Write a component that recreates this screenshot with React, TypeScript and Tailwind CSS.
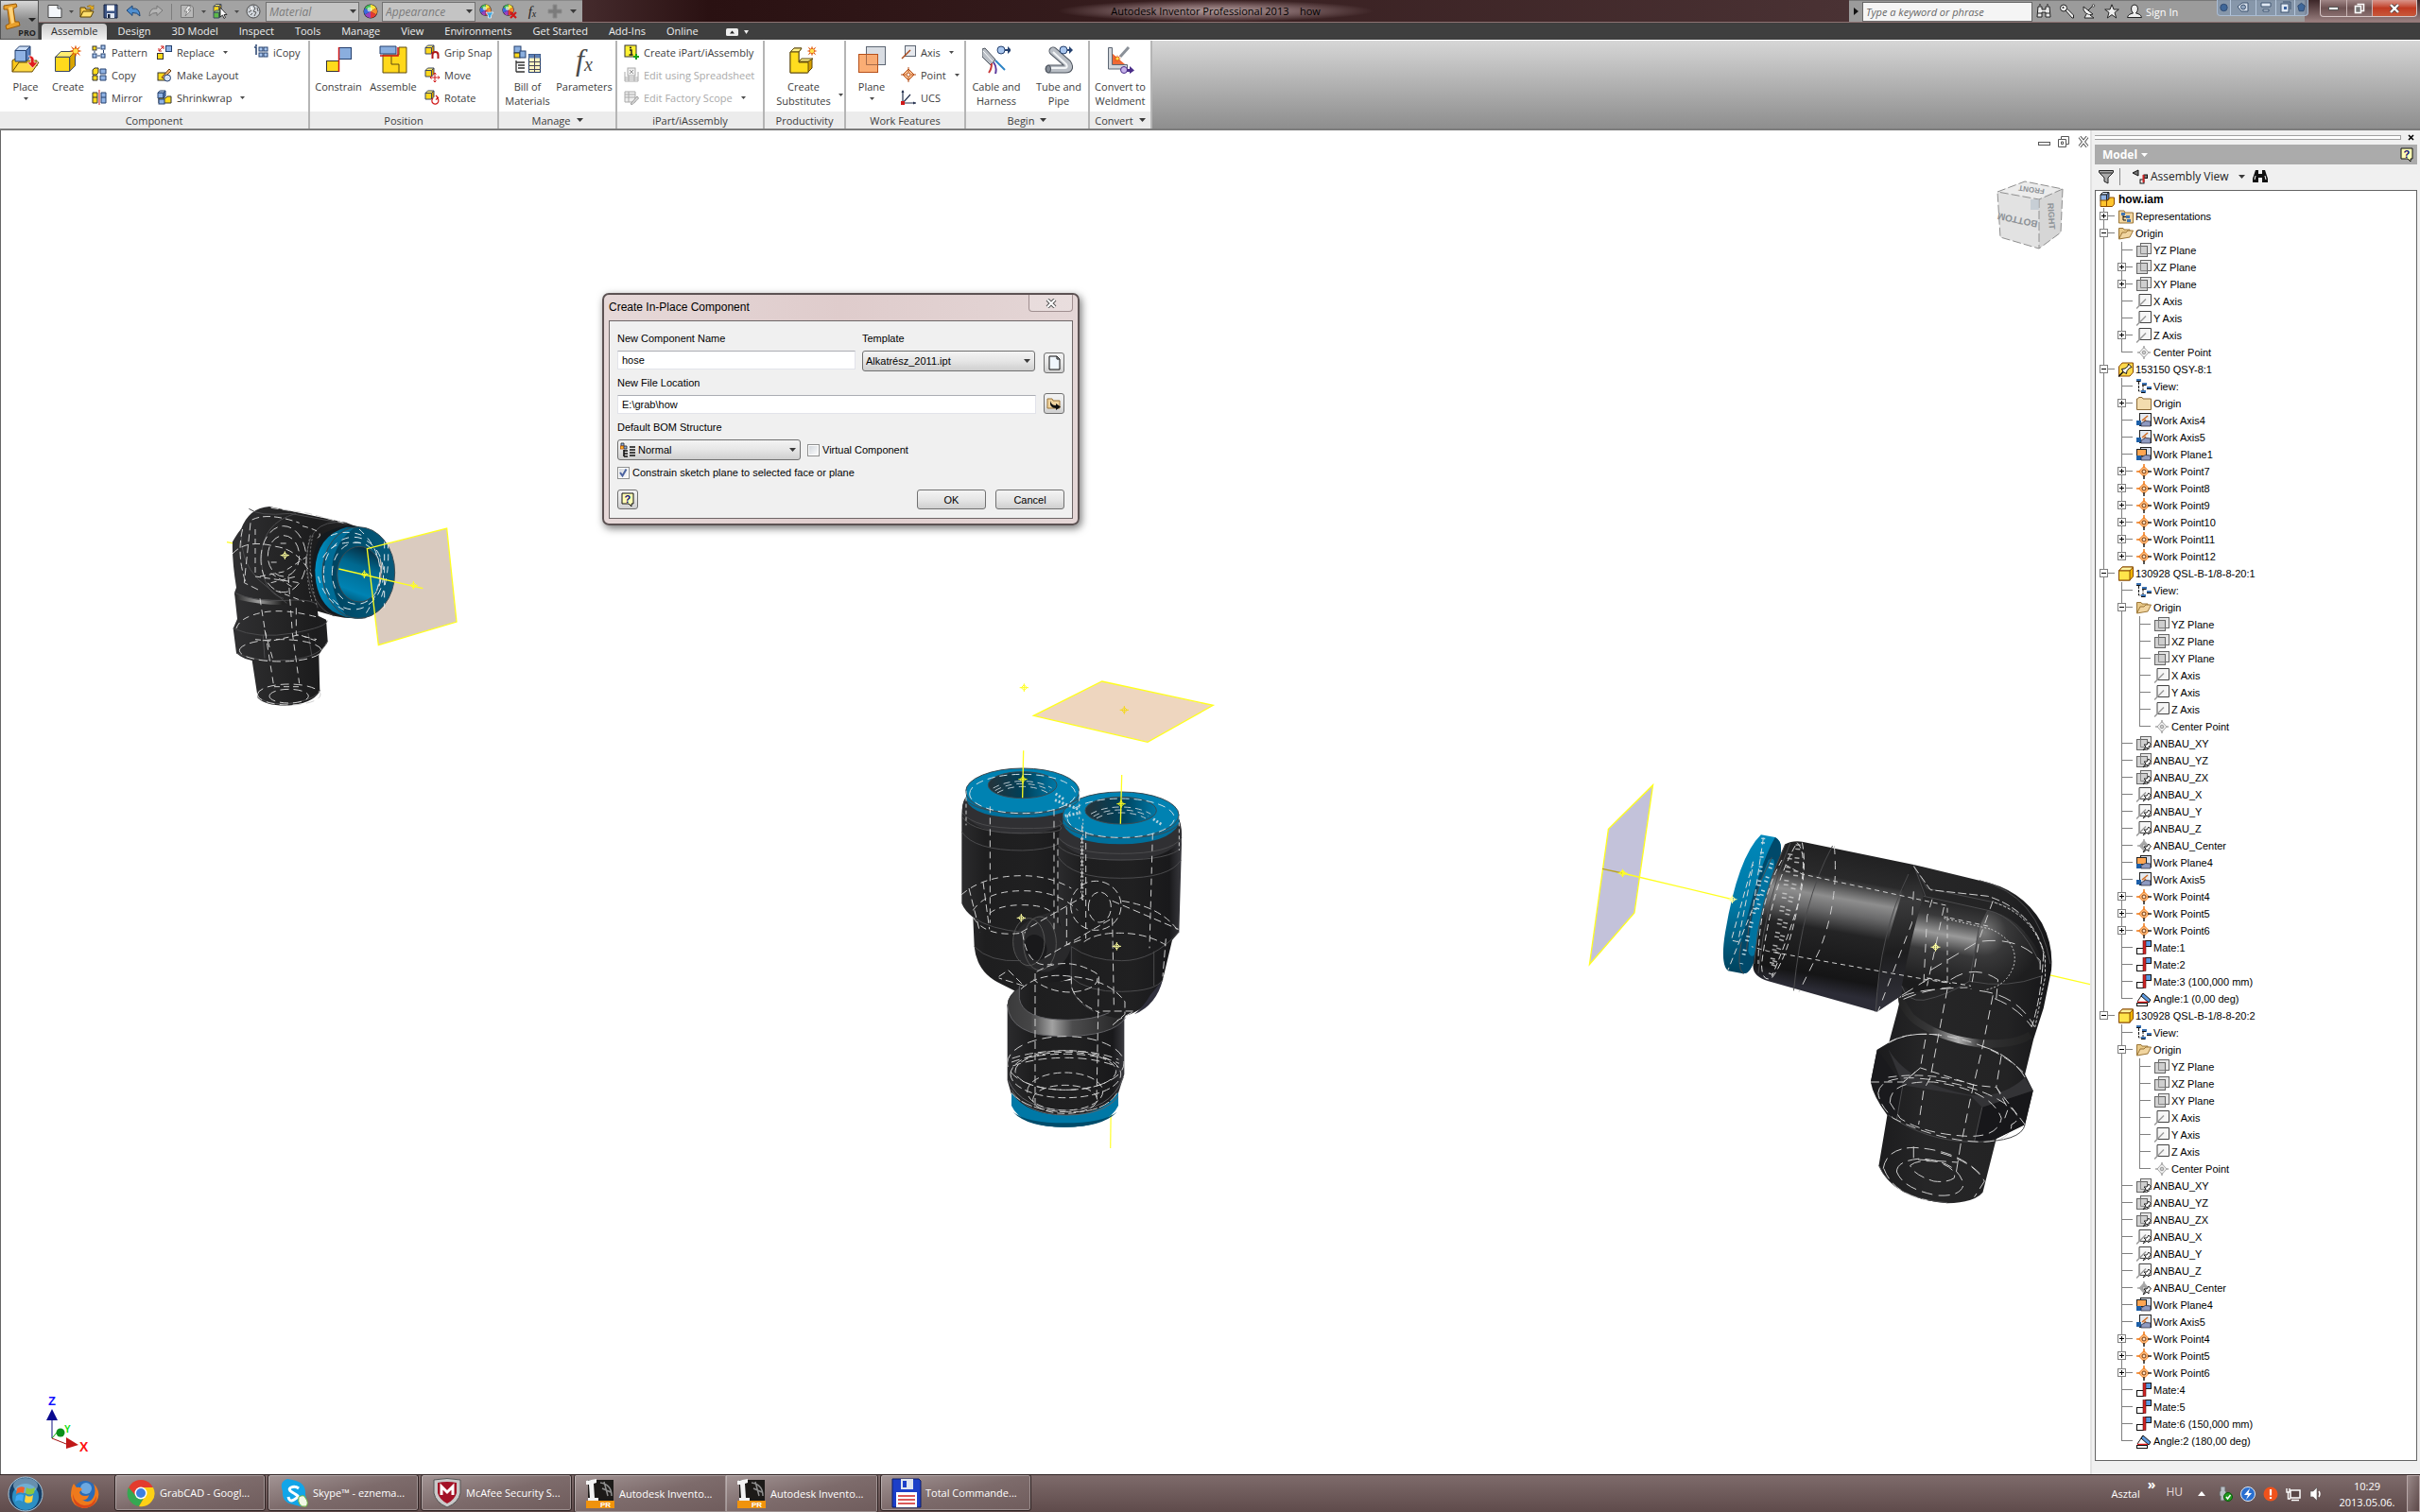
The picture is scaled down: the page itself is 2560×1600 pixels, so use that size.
import React from "react";

type P = { children?: React.ReactNode };

const ns = { vectorEffect: "non-scaling-stroke" as const };

/* ---------- shared pieces ---------- */

function Icon({ s = 16, vb = 16, children }: P & { s?: number; vb?: number }) {
  return (
    <svg width={s} height={s} viewBox={`0 0 ${vb} ${vb}`} className="shrink-0" aria-hidden="true">
      {children}
    </svg>
  );
}

function Caret({ dark = true }: { dark?: boolean }) {
  return (
    <svg width="7" height="4" viewBox="0 0 7 4" className="shrink-0" aria-hidden="true">
      <path d="M0 0H7L3.500 4Z" fill={dark ? "#3a3a3a" : "#fff"} />
    </svg>
  );
}

function SmallCaret() {
  return (
    <svg width="5" height="3" viewBox="0 0 5 3" className="shrink-0" aria-hidden="true">
      <path d="M0 0H5L2.500 3Z" fill="#4a4a4a" />
    </svg>
  );
}

const Star = ({ x, y, r = 5 }: { x: number; y: number; r?: number }) => (
  <g transform={`translate(${x} ${y}) scale(${r / 5})`}>
    <path d="M0-5L1-2L4-4L2-1L5 0L2 1L4 4L1 2L0 5L-1 2L-4 4L-2 1L-5 0L-2-1L-4-4L-1-2Z" fill="#e2580c" />
    <circle r="2" fill="#ffe24d" />
  </g>
);

const Cube = ({ x, y, w, c = "#ffd91c", t = "#ffee70", d = "#d9a400", k = "#3a4660" }: { x: number; y: number; w: number; c?: string; t?: string; d?: string; k?: string }) => {
  const o = w * 0.28;
  const f = w - o;
  return (
    <g transform={`translate(${x} ${y})`} stroke={k} strokeWidth="1" strokeLinejoin="round">
      <path d={`M0 ${o}L${o} 0H${w}L${f} ${o}Z`} fill={t} />
      <path d={`M${f} ${o}L${w} 0V${f}L${f} ${w}Z`} fill={d} />
      <rect x="0" y={o} width={f} height={f} fill={c} />
    </g>
  );
};
const BLUE = { c: "#8fb2e4", t: "#cfe0f8", d: "#5a80bd", k: "#24406e" };

/* ---------- quick access icons ---------- */

const QNew = () => (
  <Icon>
    <path d="M1 1.500H11L15 5V14.500H1Z" fill="#f4f7fb" stroke="#444" />
    <path d="M11 1.500V5H15" fill="#c8d0dc" stroke="#444" />
  </Icon>
);
const QOpen = () => (
  <Icon>
    <path d="M1 14V4H6L7 6H12V8" fill="#f6c84a" stroke="#5e4300" />
    <path d="M1 14L4 8H15L12 14Z" fill="#ffdf6e" stroke="#5e4300" />
    <path d="M8 3Q11 0 14 3L15 1.500V6H10.500L12.500 4.500Q11 2.500 8 3" fill="#f3b722" stroke="#7a5500" strokeWidth=".5" />
  </Icon>
);
const QSave = () => (
  <Icon>
    <path d="M1 1H15V15H1Z" fill="#3d5585" stroke="#17233f" />
    <rect x="4" y="1.500" width="8" height="6" fill="#fff" />
    <rect x="4" y="10" width="8" height="5" fill="#dfe6f2" />
    <rect x="5" y="11" width="2.500" height="4" fill="#17233f" />
  </Icon>
);
const QArrow = ({ flip = false }: { flip?: boolean }) => (
  <Icon>
    <g transform={flip ? "translate(16 0) scale(-1 1)" : undefined}>
      <path d="M1 7L7 2V5Q15 4 15 13Q12 9 7 9.500V12.500Z" fill={flip ? "#b4b4b4" : "#4f8fd0"} stroke={flip ? "#777" : "#1f4676"} />
    </g>
  </Icon>
);
const QUpdate = () => (
  <Icon>
    <path d="M1.500 1.500H12L14.500 4V14.500H1.500Z" fill="#b8b8b8" stroke="#777" />
    <path d="M9 2L5 8H8L6 13L12 7H9L12 3Z" fill="#eee" stroke="#777" strokeWidth=".8" />
  </Icon>
);
const QSelect = () => (
  <Icon>
    <Cube x={1} y={0.5} w={8} />
    <Cube x={1} y={7} w={8} c="#5cba47" t="#a5e294" d="#2d8a20" />
    <path d="M8 4V14L10.500 12L12 15.500L13.500 14.500L12 11.500H15Z" fill="#fff" stroke="#222" strokeWidth=".9" />
  </Icon>
);
const QBall = () => (
  <Icon>
    <circle cx="8" cy="8" r="7" fill="#cfd4da" stroke="#4c4c4c" />
    <path d="M4 4L6 7L3 9M8 2L10 5L8 8L11 9L9 13M12 4L13 8M5 12L7 10" fill="none" stroke="#555" />
    <circle cx="6" cy="5" r="1.500" fill="#fff" />
  </Icon>
);
const Wheel = ({ extra }: { extra?: "pin" | "x" }) => (
  <Icon>
    <g transform={extra ? "scale(.82)" : undefined}>
      <circle cx="8" cy="8" r="7.500" fill="#222" />
      <path d="M8 8V1A7 7 0 0 1 14 4.500Z" fill="#f8e43c" />
      <path d="M8 8L14 4.500A7 7 0 0 1 14 11.500Z" fill="#f58a2c" />
      <path d="M8 8L14 11.500A7 7 0 0 1 8 15Z" fill="#e33a34" />
      <path d="M8 8V15A7 7 0 0 1 2 11.500Z" fill="#9742c0" />
      <path d="M8 8L2 11.500A7 7 0 0 1 2 4.500Z" fill="#3a6ae0" />
      <path d="M8 8L2 4.500A7 7 0 0 1 8 1Z" fill="#48c25c" />
      <circle cx="7" cy="6" r="2.500" fill="#fff" opacity=".6" />
    </g>
    {extra === "pin" && <path d="M7 9H15L12.500 12.500V15H9.500V12.500Z" fill="#3aa5e0" stroke="#fff" strokeWidth=".7" />}
    {extra === "x" && <path d="M9 9L15 15M15 9L9 15" stroke="#d01818" strokeWidth="2.200" />}
  </Icon>
);
const QPlus = () => (
  <Icon>
    <path d="M6 1H10V6H15V10H10V15H6V10H1V6H6Z" fill="#7b7b7b" stroke="#8d8d8d" />
  </Icon>
);

/* ---------- ribbon icons ---------- */

const BPlace = () => (
  <Icon s={30} vb={30}>
    <path d="M1 28V16L6 13H12L14 16H27V22" fill="#ffc91a" stroke="#6b4a00" />
    <path d="M1 28L8 18H29L22 28Z" fill="#ffda45" stroke="#6b4a00" />
    <Cube x={4} y={1} w={16} {...BLUE} />
    <path d="M18 11Q25 10 24 18H28L22.500 24L17 18H20.500Q21 13 18 11" fill="#e01b1b" stroke="#fff" strokeWidth=".6" />
  </Icon>
);
const BCreate = () => (
  <Icon s={30} vb={30}>
    <Cube x={1.500} y={6.500} w={21} />
    <Star x={23} y={6} r={6.500} />
  </Icon>
);
const BConstrain = () => (
  <Icon s={30} vb={30}>
    <rect x="2.500" y="16.500" width="13" height="11" fill="#ffdb1c" stroke="#333" />
    <rect x="15.500" y="2.500" width="13" height="12" fill="#8aaede" stroke="#24406e" />
    <path d="M15.500 2V28" stroke="#d01818" strokeWidth="1.500" />
  </Icon>
);
const BAssemble = () => (
  <Icon s={30} vb={30}>
    <path d="M4 10H21V2H29V29H4Z" fill="#ffd81c" stroke="#5e4a10" />
    <path d="M13 11V20H21V29" fill="none" stroke="#5e4a10" />
    <path d="M1 1H18V9H1Z" fill="#8aaede" stroke="#24406e" />
    <path d="M1 11H20V2" fill="none" stroke="#d01818" strokeWidth="1.500" />
  </Icon>
);
const BBom = () => (
  <Icon s={30} vb={30}>
    <rect x="1" y="1" width="7" height="7" fill="#8aaede" stroke="#24406e" />
    <rect x="1" y="8" width="6" height="5" fill="#ffdb1c" stroke="#333" />
    <rect x="7" y="6" width="6" height="7" fill="#8aaede" stroke="#24406e" />
    <path d="M3 16V28M3 18H12M5 21H12M5 24H12M3 28H12" stroke="#333" strokeWidth="1.300" />
    <rect x="16.500" y="9.500" width="12" height="19" fill="#fdf3c0" stroke="#24406e" />
    <rect x="16.500" y="9.500" width="12" height="4" fill="#5d80b5" />
    <path d="M16 17.500H29M16 21.500H29M16 25.500H29M22.500 10V29" stroke="#445" />
  </Icon>
);
const Fx = ({ big = false }: { big?: boolean }) => (
  <span aria-hidden="true" className={big ? "flex h-[30px] items-center font-['Liberation_Serif',serif] text-[32px] leading-none text-[#4a4a4a] italic" : "flex h-4 w-4 items-center justify-center font-['Liberation_Serif',serif] text-[15px] leading-none text-[#222] italic"}>
    f<span className={big ? "self-end text-[20px]" : "self-end text-[10px]"}>x</span>
  </span>
);
const BSubst = () => (
  <Icon s={30} vb={30}>
    <path d="M1 7L5 3H13L10 7V17H20L24 14V24L19 29H1Z" fill="#d79f00" stroke="#5e4a10" />
    <path d="M1 7L5 3H13L10 7ZM10 17L13 14H25L20 17Z" fill="#fff08a" stroke="#5e4a10" />
    <path d="M1 7H10V18H20V29H1Z" fill="#ffdd1f" stroke="#5e4a10" />
    <Star x={24} y={6} r={5.500} />
  </Icon>
);
const BPlane = () => (
  <Icon s={30} vb={30}>
    <rect x="9.500" y="1.500" width="20" height="19" fill="#d9dde3" stroke="#5d6673" />
    <rect x="1.500" y="9.500" width="20" height="19" fill="#fba465" fillOpacity=".9" stroke="#b6501a" />
    <path d="M9.500 9.500V20.500H21.500" fill="none" stroke="#a66b4a" />
  </Icon>
);
const BCable = () => (
  <Icon s={30} vb={30}>
    <path d="M0 4V12L9 21L14 15L3 3Z" fill="#b9bec5" stroke="#4b525c" />
    <path d="M1 6L11 17" stroke="#fff" />
    <path d="M10 19Q10 25 7 29" fill="none" stroke="#c93a3a" strokeWidth="2" />
    <path d="M12 18Q16 23 14 30" fill="none" stroke="#5d3a9e" strokeWidth="2" />
    <path d="M14 16L24 26" fill="none" stroke="#2c84c6" strokeWidth="2" />
    <circle cx="20" cy="5" r="4" fill="#a9c6ee" stroke="#24406e" />
    <path d="M24 4H27V1L31 5L27 9V6H24Z" fill="#24406e" />
  </Icon>
);
const BTube = () => (
  <Icon s={30} vb={30}>
    <path d="M5 25H22Q28 25 24 19L9 6" fill="none" stroke="#4b525c" strokeWidth="9" strokeLinecap="round" />
    <path d="M5 25H22Q28 25 24 19L9 6" fill="none" stroke="#b9bec5" strokeWidth="7" strokeLinecap="round" />
    <path d="M5 24H21Q25 24 23 20L9 7" fill="none" stroke="#f3f5f7" strokeWidth="2" />
    <ellipse cx="4" cy="25" rx="2.500" ry="4" fill="#888f99" stroke="#4b525c" />
    <circle cx="20" cy="5" r="4" fill="#a9c6ee" stroke="#24406e" />
    <path d="M24 4H26V1L30 5L26 9V6H24Z" fill="#24406e" />
  </Icon>
);
const BWeld = () => (
  <Icon s={30} vb={30}>
    <path d="M6 8L20 20H6Z" fill="#ef6a36" />
    <path d="M2.500 2.500H6.500V20.500H22.500V25H2.500Z" fill="#d2d6db" stroke="#5d6673" />
    <path d="M24 2L15 12" stroke="#8a9098" strokeWidth="3" />
    <Star x={12} y={14} r={4} />
    <circle cx="19" cy="26" r="3.500" fill="#c5b2ea" stroke="#4a2d88" />
    <path d="M22 25H25V22L30 26.500L25 30V28H22Z" fill="#4a2d88" />
  </Icon>
);

const sq = (x: number, y: number, b = false) => (
  <rect x={x} y={y} width="4" height="4" fill={b ? "#a9c6ee" : "#ffdb1c"} stroke={b ? "#24406e" : "#333"} />
);
const IPattern = () => (
  <Icon>
    {sq(1, 2)}
    {sq(10, 1, true)}
    {sq(1, 10, true)}
    {sq(10, 10, true)}
    <path d="M6 4H9M3 7V9M12.500 6V9M6 12H9" stroke="#24406e" />
  </Icon>
);
const ICopy = () => (
  <Icon>
    <path d="M1 3L3 1H7V6L5 8H1ZM1 9H6V14H1Z" fill="#ffdb1c" stroke="#333" />
    <path d="M9 2H15V7H9ZM9 9H15V14H9Z" fill="#8fb2e4" stroke="#24406e" />
  </Icon>
);
const IMirror = () => (
  <Icon>
    <path d="M1 3H6V14H1ZM1 8H6" fill="#ffdb1c" stroke="#333" />
    <path d="M10 3H15V14H10ZM10 8H15" fill="#8fb2e4" stroke="#24406e" />
    <path d="M8 0V16" stroke="#d01818" />
  </Icon>
);
const IReplace = () => (
  <Icon>
    <rect x=".5" y="9.500" width="6" height="6" fill="#ffdb1c" stroke="#333" />
    <rect x="9.500" y="1.500" width="6" height="6" fill="#8fb2e4" stroke="#24406e" />
    <path d="M2 7L7 2M2 4V7H5M4 2H7V5" fill="none" stroke="#d01818" />
  </Icon>
);
const ILayout = () => (
  <Icon>
    <rect x="1" y="6" width="8" height="8" fill="#ffdb1c" stroke="#333" />
    <path d="M5 11L13 2L15 4L7 12Z" fill="#f4b36a" stroke="#6a3d10" />
    <circle cx="11" cy="11.500" r="3.500" fill="#d7e3f5" stroke="#24406e" />
  </Icon>
);
const IShrink = () => (
  <Icon>
    <Cube x={1} y={1} w={8} {...BLUE} />
    <path d="M2 9H9L11 7H15V14H2Z" fill="#ffdb1c" stroke="#333" />
    <rect x="2" y="10" width="6" height="5" fill="#8fb2e4" stroke="#24406e" />
  </Icon>
);
const IiCopy = () => (
  <Icon>
    <path d="M1 3H3V11" fill="none" stroke="#24406e" strokeWidth="1.500" />
    <circle cx="3" cy="1" r="1" fill="#24406e" />
    {sq(6, 3, true)}
    {sq(11, 3, true)}
    {sq(6, 9, true)}
    {sq(11, 9, true)}
  </Icon>
);
const IGrip = ({ k }: { k: "grip" | "move" | "rot" }) => (
  <Icon>
    <Cube x={1} y={1} w={9} />
    {k === "grip" && <path d="M8.500 15V11Q8.500 8 11.500 8T14.500 11V15" fill="none" stroke="#b01717" strokeWidth="2" />}
    {k === "move" && <path d="M11 6V16M6 11H16M9.500 7.500L11 6L12.500 7.500M9.500 14.500L11 16L12.500 14.500M7.500 9.500L6 11L7.500 12.500M14.500 9.500L16 11L14.500 12.500" fill="none" stroke="#d01818" />}
    {k === "rot" && <path d="M9 9A3.500 3.500 0 1 0 13 8.500M12 6L14.500 8.500L12 10.500" fill="none" stroke="#d01818" strokeWidth="1.200" />}
  </Icon>
);
const IPart = () => (
  <Icon>
    <rect x="1" y="1" width="12" height="12" fill="#fff133" stroke="#333" />
    <path d="M6 6H8V11M5.500 11H9.500" fill="none" stroke="#222" strokeWidth="1.500" />
    <circle cx="7" cy="3.500" r="1.100" fill="#222" />
    <path d="M13 10V16M10 13H16" stroke="#18a018" strokeWidth="2" />
  </Icon>
);
const ISheet = () => (
  <Icon>
    <rect x="4" y="1" width="8" height="8" fill="#eee" stroke="#aaa" />
    <path d="M6 3L10 7M10 3L6 7" stroke="#999" />
    <path d="M1 5V15H15V5M1 11H15M1 13H15M5 9V15M11 9V15" fill="none" stroke="#aaa" />
  </Icon>
);
const IScope = () => (
  <Icon>
    <path d="M1 2H12V13H1ZM1 5H12M1 8H12M5 2V13" fill="#eee" stroke="#aaa" />
    <path d="M7 15L14 7L15.500 9L9 15.500Z" fill="#ddd" stroke="#999" />
  </Icon>
);
const IAxis = () => (
  <Icon>
    <rect x="4.500" y="1.500" width="11" height="11" fill="#e6e9ee" stroke="#5d6673" />
    <path d="M1 15L10 6" stroke="#a8481a" strokeWidth="1.500" />
  </Icon>
);
const IPoint = () => (
  <Icon>
    <path d="M8 2L14 8L8 14L2 8Z" fill="#fbc08f" stroke="#b6501a" />
    <path d="M8 0V5M8 11V16M0 8H5M11 8H16" stroke="#b6501a" />
    <circle cx="8" cy="8" r="2" fill="#fff" stroke="#b6501a" />
  </Icon>
);
const IUcs = () => (
  <Icon>
    <path d="M2 1V14H16M2 14L10 5" fill="none" stroke="#24304e" strokeWidth="1.200" />
    <rect x="0" y="12" width="4" height="4" fill="#d01818" />
    <path d="M.5 3L2 0L3.500 3ZM13 12.500L16 14L13 15.500Z" fill="#24304e" />
  </Icon>
);

/* ---------- ribbon ---------- */

function Big({ icon, lines, w, caret }: { icon: React.ReactNode; lines: string[]; w: string; caret?: boolean }) {
  return (
    <button type="button" className={`flex ${w} shrink-0 flex-col items-center pt-[5px] leading-[15px] whitespace-nowrap`}>
      {icon}
      <span className="mt-[6px]">{lines[0]}</span>
      {lines[1] && <span>{lines[1]}</span>}
      {caret && !lines[1] && (
        <span className="mt-1 flex">
          <SmallCaret />
        </span>
      )}
    </button>
  );
}

function Small({ icon, label, caret, off }: { icon: React.ReactNode; label: string; caret?: boolean; off?: boolean }) {
  return (
    <button type="button" disabled={off} className={`flex h-6 items-center gap-[5px] whitespace-nowrap ${off ? "text-[#a9a9a9]" : ""}`}>
      {icon}
      {label}
      {caret && (
        <span className="ml-1 flex">
          <SmallCaret />
        </span>
      )}
    </button>
  );
}

function Panel({ title, w, caret, children }: P & { title: string; w: string; caret?: boolean }) {
  return (
    <section className={`flex ${w} shrink-0 flex-col border-r-2 border-[#b5b5b5] bg-white`}>
      <div className="flex h-[75px]">{children}</div>
      <h2 className="flex h-[18px] items-center justify-center gap-[6px] bg-[#ececec] whitespace-nowrap">
        {title}
        {caret && <Caret />}
      </h2>
    </section>
  );
}
const Col = ({ w = "", children }: P & { w?: string }) => <div className={`flex shrink-0 flex-col ${w}`}>{children}</div>;

function Ribbon() {
  return (
    <div className="flex h-24 border-t border-b-2 border-t-white border-b-[#7c7c7c] bg-linear-to-b from-[#d6d6d6] to-[#8e8e8e] text-[#3c3c3c]">
      <Panel title="Component" w="w-[328px]">
        <Big icon={<BPlace />} lines={["Place"]} w="w-[54px]" caret />
        <Big icon={<BCreate />} lines={["Create"]} w="w-[36px]" />
        <Col w="ml-[7px] w-[69px]">
          <Small icon={<IPattern />} label="Pattern" />
          <Small icon={<ICopy />} label="Copy" />
          <Small icon={<IMirror />} label="Mirror" />
        </Col>
        <Col w="w-[102px]">
          <Small icon={<IReplace />} label="Replace" caret />
          <Small icon={<ILayout />} label="Make Layout" />
          <Small icon={<IShrink />} label="Shrinkwrap" caret />
        </Col>
        <Col>
          <Small icon={<IiCopy />} label="iCopy" />
        </Col>
      </Panel>
      <Panel title="Position" w="w-[200px]">
        <Big icon={<BConstrain />} lines={["Constrain"]} w="w-[60px]" />
        <Big icon={<BAssemble />} lines={["Assemble"]} w="w-[56px]" />
        <Col w="ml-[5px]">
          <Small icon={<IGrip k="grip" />} label="Grip Snap" />
          <Small icon={<IGrip k="move" />} label="Move" />
          <Small icon={<IGrip k="rot" />} label="Rotate" />
        </Col>
      </Panel>
      <Panel title="Manage" w="w-[125px]" caret>
        <Big icon={<BBom />} lines={["Bill of", "Materials"]} w="w-[60px]" />
        <Big icon={<Fx big />} lines={["Parameters"]} w="w-[60px]" />
      </Panel>
      <Panel title="iPart/iAssembly" w="w-[156px]">
        <Col w="ml-[7px]">
          <Small icon={<IPart />} label="Create iPart/iAssembly" />
          <Small icon={<ISheet />} label="Edit using Spreadsheet" off />
          <Small icon={<IScope />} label="Edit Factory Scope" caret off />
        </Col>
      </Panel>
      <Panel title="Productivity" w="w-[86px]">
        <Big icon={<BSubst />} lines={["Create", "Substitutes"]} w="ml-1 w-[74px]" />
        <span className="mt-[56px] flex">
          <SmallCaret />
        </span>
      </Panel>
      <Panel title="Work Features" w="w-[127px]">
        <Big icon={<BPlane />} lines={["Plane"]} w="w-[54px]" caret />
        <Col w="ml-1">
          <Small icon={<IAxis />} label="Axis" caret />
          <Small icon={<IPoint />} label="Point" caret />
          <Small icon={<IUcs />} label="UCS" />
        </Col>
      </Panel>
      <Panel title="Begin" w="w-[131px]" caret>
        <Big icon={<BCable />} lines={["Cable and", "Harness"]} w="w-[64px]" />
        <div className="mx-px mt-[3px] w-px bg-[#c4c4c4]" />
        <Big icon={<BTube />} lines={["Tube and", "Pipe"]} w="w-[64px]" />
      </Panel>
      <Panel title="Convert" w="w-[66px]" caret>
        <Big icon={<BWeld />} lines={["Convert to", "Weldment"]} w="w-[64px]" />
      </Panel>
    </div>
  );
}

/* ---------- title bar ---------- */

const TSearch = () => (
  <Icon>
    <path d="M2 3H6V6H10V3H14L15 14H10V9H6V14H1Z" fill="#e9e9e9" stroke="#222" />
    <path d="M2 10H6M10 10H14M3 1H5M11 1H13" stroke="#222" />
  </Icon>
);
const TKey = () => (
  <Icon>
    <circle cx="5" cy="4.500" r="3.500" fill="#eee" stroke="#222" />
    <path d="M7 7L14 15H15.500V12L9 5.500Z" fill="#eee" stroke="#222" />
    <circle cx="4.500" cy="4" r="1" fill="#222" />
  </Icon>
);
const TDish = () => (
  <Icon>
    <path d="M2 3L12 11Q8 13 4.500 10T2 3Z" fill="#eee" stroke="#222" />
    <path d="M7 7L12 2M5 11L3 15H13L9 12" fill="#eee" stroke="#222" />
    <circle cx="12.500" cy="2" r="1.300" fill="#eee" stroke="#222" strokeWidth=".7" />
  </Icon>
);
const TStar = () => (
  <Icon>
    <path d="M8 .8L10 6H15.300L11 9.300L12.700 15L8 11.600L3.300 15L5 9.300L.7 6H6Z" fill="#eee" stroke="#222" />
  </Icon>
);
const TUser = () => (
  <Icon>
    <path d="M8 1Q11.500 1 11.500 5Q11.500 8 9.500 10Q15 11 15.500 14.500H.5Q1 11 6.500 10Q4.500 8 4.500 5Q4.500 1 8 1Z" fill="#eee" stroke="#222" />
  </Icon>
);

function QatSelect({ label, w }: { label: string; w: string }) {
  return (
    <span className={`relative flex h-[21px] ${w} items-center border border-[#707070] bg-[#c4c4c4]`}>
      <select aria-label={label} className="h-full w-full appearance-none bg-transparent pl-[3px] text-[12px] text-[#7b7b7b] italic">
        <option>{label}</option>
      </select>
      <span className="pointer-events-none absolute right-[2px] flex">
        <Caret />
      </span>
    </span>
  );
}

const Tool = ({ label, w = "w-6", children }: P & { label: string; w?: string }) => (
  <button type="button" aria-label={label} className={`flex h-full ${w} shrink-0 items-center justify-center`}>
    {children}
  </button>
);

function WinButtons() {
  return (
    <div className="flex h-[18px] rounded-b border border-t-0 border-[#d6c6c6] bg-linear-to-b from-[#a08686] via-[#6d5252] to-[#8a7070]">
      <button type="button" aria-label="Minimize" className="flex w-[28px] items-center justify-center border-r border-[#c9b5b5]">
        <span className="h-1 w-[11px] border border-[#555] bg-white" />
      </button>
      <button type="button" aria-label="Restore" className="flex w-[27px] items-center justify-center border-r border-[#c9b5b5]">
        <svg width="12" height="12" viewBox="0 0 12 12">
          <path d="M3.500 1.500H10.500V8.500H8" fill="none" stroke="#fff" strokeWidth="1.600" />
          <rect x="1.500" y="3.500" width="6" height="7" fill="#777" stroke="#fff" strokeWidth="1.600" />
        </svg>
      </button>
      <button type="button" aria-label="Close" className="flex w-[46px] items-center justify-center rounded-br bg-linear-to-b from-[#d8948a] via-[#c03a22] to-[#c8583a]">
        <svg width="12" height="10" viewBox="0 0 12 10">
          <path d="M2 1L10 9M10 1L2 9" stroke="#544" strokeWidth="4" />
          <path d="M2 1L10 9M10 1L2 9" stroke="#fff" strokeWidth="2.400" />
        </svg>
      </button>
    </div>
  );
}

function LangBar() {
  return (
    <div className="absolute top-0 right-[118px] flex h-[17px] rounded-b border border-t-0 border-[#a9bcd4] bg-[#8296ae]/80">
      {[14, 27, 21, 20, 13].map((w, i) => (
        <span key={i} className="flex items-center justify-center border-r border-[#b6c7dc] last:border-r-0" style={{ width: w }}>
          <svg width="14" height="14" viewBox="0 0 14 14">
            {i === 0 && <circle cx="7" cy="7" r="4" fill="#3f6799" stroke="#2e4a70" />}
            {i === 1 && (
              <>
                <path d="M1 6L6 2H12V11H5Z" fill="#d5deea" stroke="#3f5571" />
                <circle cx="7" cy="6.500" r="2.500" fill="#8fa3bd" stroke="#3f5571" />
              </>
            )}
            {i === 2 && <path d="M2 2H12V6H2ZM4 9H10V11H4Z" fill="#dfe8f3" stroke="#3f5571" />}
            {i === 3 && (
              <>
                <rect x="2" y="3" width="8" height="9" fill="#dfe8f3" stroke="#3f5571" />
                <rect x="5" y="6" width="3" height="3" fill="#3a62a0" />
                <path d="M4 1H12V9" fill="none" stroke="#3f5571" />
              </>
            )}
            {i === 4 && <path d="M7 2L11 5L9.500 11H4.500L3 5Z" fill="#3f6799" stroke="#2e4a70" />}
          </svg>
        </span>
      ))}
    </div>
  );
}

function TitleBar() {
  return (
    <header className="flex bg-[#3f3f3f]">
      <button type="button" aria-label="Application menu" className="relative h-[42px] w-[41px] shrink-0 border border-[#555] bg-linear-to-b from-[#d8d8d8] via-[#8d8d8d] to-[#8a8a8a]">
        <svg width="39" height="40" viewBox="0 0 39 40" aria-hidden="true">
          <path d="M3 5L16 3L17 6L13 8L15 22L19 22L20 26L6 30L5 26L9 24L7 9L3 9Z" fill="#e8a02c" stroke="#9a5a08" />
          <path d="M8 7L12 6L14 23L11 24Z" fill="#ffd37a" />
          <path d="M29 18H37L33 22Z" fill="#222" />
        </svg>
        <span className="absolute right-[2px] bottom-0 text-[9px] leading-[12px] font-bold text-[#222]">PRO</span>
      </button>
      <div className="flex min-w-0 flex-1 flex-col">
        <div className="relative flex h-6 border-b border-[#8d7272] bg-linear-to-r from-[#4a3032] via-[#2a1112] to-[#3d2426]">
          <div className="flex h-[23px] w-[575px] shrink-0 items-center border-t border-[#8a8a8a] bg-[#a3a3a3] pl-[5px]">
            <Tool label="New"><QNew /></Tool>
            <Tool label="New options" w="w-[10px]"><SmallCaret /></Tool>
            <Tool label="Open"><QOpen /></Tool>
            <Tool label="Save" w="w-[25px]"><QSave /></Tool>
            <Tool label="Undo"><QArrow /></Tool>
            <Tool label="Redo"><QArrow flip /></Tool>
            <span className="mx-1 h-[17px] w-px bg-[#7d7d7d]" />
            <Tool label="Update"><QUpdate /></Tool>
            <Tool label="Update options" w="w-[11px]"><SmallCaret /></Tool>
            <Tool label="Select"><QSelect /></Tool>
            <Tool label="Select options" w="w-[10px]"><SmallCaret /></Tool>
            <Tool label="Material browser" w="w-[26px]"><QBall /></Tool>
            <QatSelect label="Material" w="w-[99px]" />
            <Tool label="Appearance browser"><Wheel /></Tool>
            <QatSelect label="Appearance" w="w-[99px]" />
            <Tool label="Adjust"><Wheel extra="pin" /></Tool>
            <Tool label="Clear"><Wheel extra="x" /></Tool>
            <Tool label="Parameters"><Fx /></Tool>
            <Tool label="Add"><QPlus /></Tool>
            <Tool label="Customize" w="w-[14px]"><Caret /></Tool>
          </div>
          <div className="flex flex-1 items-center justify-center bg-linear-to-r from-[#452b2d] via-[#2a1112] via-10% to-[#4a3234]">
            <h1 className="bg-radial-[closest-side] from-[#b09a9a] via-[#7d6365] to-transparent px-14 text-[11px] leading-[23px] whitespace-pre text-black">Autodesk Inventor Professional 2013    how</h1>
          </div>
          <div className="flex h-[23px] w-[482px] shrink-0 items-center border-t border-[#777] bg-[#9b9b9b]">
            <Tool label="Collapse search" w="w-[14px]">
              <svg width="5" height="8" viewBox="0 0 5 8"><path d="M0 0L5 4L0 8Z" fill="#111" /></svg>
            </Tool>
            <input aria-label="Search" placeholder="Type a keyword or phrase" className="h-[21px] w-[180px] border border-[#666] bg-[#f5f5f5] pl-[3px] text-[11px] italic placeholder:text-[#666]" />
            <Tool label="Search help"><TSearch /></Tool>
            <Tool label="Subscription"><TKey /></Tool>
            <Tool label="Communication"><TDish /></Tool>
            <Tool label="Favorites"><TStar /></Tool>
            <Tool label="Account"><TUser /></Tool>
            <button type="button" className="text-[11px] text-white">Sign In</button>
          </div>
          <div className="flex w-[122px] shrink-0 justify-end bg-linear-to-b from-[#3d2729] to-[#9a8080] pr-[3px]">
            <WinButtons />
          </div>
          <LangBar />
        </div>
        <nav className="flex h-[18px] items-end pl-[3px] text-[11px] leading-[16px] text-[#f0f0f0]">
          {["Assemble", "Design", "3D Model", "Inspect", "Tools", "Manage", "View", "Environments", "Get Started", "Add-Ins", "Online"].map((t, i) => (
            <a key={t} href="#" className={i === 0 ? "h-[17px] rounded-t-sm bg-linear-to-b from-[#c9c9c9] to-[#f2f2f2] px-[10px] text-[#2b2b2b]" : "h-[17px] px-[11px]"}>
              {t}
            </a>
          ))}
          <button type="button" aria-label="Ribbon display" className="ml-[18px] flex h-[17px] items-center gap-[6px]">
            <svg width="13" height="8" viewBox="0 0 13 8"><rect width="13" height="8" rx="1.500" fill="#eee" /><path d="M4 5.500H9L6.500 2.500Z" fill="#222" /></svg>
            <svg width="5" height="4" viewBox="0 0 5 4"><path d="M0 0H5L2.500 4Z" fill="#eee" /></svg>
          </button>
        </nav>
      </div>
    </header>
  );
}

/* ---------- 3D view ---------- */

const Hid = ({ d, s = "7 5", c = "#cfcfcf" }: { d: string; s?: string; c?: string }) => <path d={d} fill="none" stroke={c} strokeWidth="1" strokeDasharray={s} {...ns} />;
const Edge = ({ d, c = "#4b4b4d" }: { d: string; c?: string }) => <path d={d} fill="none" stroke={c} strokeWidth="1" {...ns} />;
const el = (cx: number, cy: number, rx: number, ry: number) => `M${cx - rx} ${cy}A${rx} ${ry} 0 1 1 ${cx + rx} ${cy}A${rx} ${ry} 0 1 1 ${cx - rx} ${cy}`;
const Pt = ({ x, y, c = "#ffff20" }: { x: number; y: number; c?: string }) => (
  <g transform={`translate(${x} ${y})`} fill="none" stroke={c} strokeWidth="3">
    <path d="M0-13V13M-14 0H14M-9 0L0-9L9 0L0 9Z" />
  </g>
);
const Yl = ({ d }: { d: string }) => <path d={d} fill="none" stroke="#ffff1e" strokeWidth="1.300" {...ns} />;

function ElbowLeft() {
  return (
    <g transform="translate(220 510) scale(.333333)">
      <Yl d="M60 191L90 197" />
      <path d="M78 190Q95 160 105 150Q130 82 195 78L440 130L480 145L520 425Q470 440 400 425L348 410L350 425L375 437L380 505L352 548L355 665Q330 706 245 710Q180 710 158 685L140 567Q110 562 90 543L80 465L93 435L84 352L90 335Q76 250 78 190Z" fill="url(#dk)" />
      <path d="M84 352Q150 382 250 372L300 385Q200 400 90 372Z" fill="url(#shine1)" />
      <path d="M505 212L758 147L789 444L541 518Z" fill="#dacbbf" />
      <path d="M365 165Q430 130 480 142L500 433Q440 436 380 412Q330 350 330 290Q330 210 365 165Z" fill="#141a1f" />
      <path d="M340 280Q345 170 440 143H480V433Q440 436 395 410Q340 370 340 280Z" fill="url(#bl1)" />
      <ellipse cx="478" cy="288" rx="115" ry="145" fill="url(#bl2)" />
      <path d="M375 220Q410 150 465 145Q390 200 392 300Q400 380 440 425Q375 400 365 310Z" fill="#007aa8" opacity=".75" />
      <ellipse cx="480" cy="293" rx="70" ry="88" fill="url(#hole1)" />
      <path d="M545 235Q565 293 535 350Q552 293 545 235Z" fill="#cdbfb4" />
      <Edge d={el(478, 288, 115, 145) + el(480, 293, 70, 88)} c="#3b4a52" />
      <Edge d="M440 130Q300 110 315 280Q330 400 400 425M130 85Q160 110 260 100L440 133M280 100Q170 130 170 240T240 370M105 150Q100 250 160 310L250 385M84 352Q150 382 250 376T348 400M80 465Q160 500 270 480T378 440M90 543Q160 575 260 565T380 505M158 685Q210 715 280 700T355 660M318 480L330 555M175 485L180 560" />
      <Hid d="M110 150Q90 230 120 320M78 228Q120 180 215 205Q290 215 330 300M140 120Q190 95 290 130M135 130L115 320L165 345M200 82L320 100L430 130" s="8 4" />
      <Hid d={el(240, 245, 72, 105) + el(240, 235, 50, 65)} s="10 5" />
      <Hid d="M150 150L150 300L290 320M230 195H250M200 255H230M165 300L240 285L310 240M200 320L280 300M300 140Q380 160 345 180M215 345L305 380M200 290L270 335" s="6 4" />
      <Hid d="M165 370L210 655M180 470L205 560M255 300L268 480L290 640M280 400V485L345 500M90 465Q100 430 170 415T350 430" />
      <Hid d={el(230, 535, 130, 35) + el(257, 675, 100, 33) + el(257, 680, 62, 22)} s="9 5" />
      <Hid d="M150 500L200 505L290 485L345 505M210 650H300" s="6 4" />
      <Hid d={el(462, 290, 95, 115) + el(472, 290, 78, 98)} s="8 6" c="#dfe8ec" />
      <Hid d="M365 240Q400 180 490 195M350 300Q370 380 440 410M480 150Q600 260 500 420M560 190V400M570 190Q580 290 545 380M390 170Q440 150 490 170" s="7 6" c="#dfe8ec" />
      <Hid d="M325 170Q300 260 330 380M333 170Q310 260 345 390" s="2 2" c="#8a8a8a" />
      <Yl d="M505 212L758 147L789 444L541 518Z" />
      <Yl d="M415 276L682 338" />
      <Pt x={244} y={233} c="#ffffa0" />
      <Pt x={496} y={293} />
      <Pt x={652} y={328} />
    </g>
  );
}

function YFitting() {
  return (
    <g transform="translate(1000 700) scale(.333333)">
      <path d="M497 63L850 139L642 256L280 172Z" fill="#eed6bf" stroke="#ffff1e" strokeWidth="1.300" {...ns} />
      <Pt x={250} y={83} />
      <Pt x={568} y={154} c="#f4d81c" />
      <path d="M526 1395L524 1545" stroke="#ffff3c" strokeWidth="1.300" {...ns} />
      {/* left leg */}
      <path d="M66 430Q52 450 52 490V768Q62 792 88 812L92 905Q100 990 180 1025L240 1055L420 1000L430 480Z" fill="url(#cyl)" />
      <path d="M66 430Q54 445 54 470Q90 550 245 548Q330 545 372 520L425 440Z" fill="#303033" />
      <path d="M66 408V440Q90 496 245 496Q400 494 425 440V408Z" fill="#006f9b" />
      <ellipse cx="245" cy="412" rx="180" ry="73" fill="#0082b2" />
      <ellipse cx="245" cy="392" rx="109" ry="42" fill="url(#bore)" />
      {/* lower leg */}
      <path d="M238 1030Q197 1060 197 1090V1330L210 1375V1400Q240 1478 379 1478Q520 1478 549 1400V1370L568 1310V1130L500 1000Z" fill="url(#cyl)" />
      <path d="M210 1368V1410Q240 1478 379 1478T549 1410V1368Q500 1440 379 1440T210 1368Z" fill="#0078a6" />
      <path d="M215 1430Q260 1478 379 1478T545 1430Q500 1465 379 1465T215 1430Z" fill="#004c6b" />
      <path d="M238 1035Q197 1060 197 1090Q205 1190 370 1190Q540 1190 572 1125L520 1110Q470 1138 390 1138Q240 1135 235 1070Z" fill="url(#cone)" />
      {/* right leg */}
      <path d="M373 500Q358 540 358 580V740Q352 850 400 905L396 1000Q420 1110 540 1132Q650 1115 690 1010L720 885L742 858L750 580Q750 530 742 500Z" fill="url(#cyl)" />
      <path d="M600 1120Q670 1090 690 1010L650 1060Q630 1095 600 1120Z" fill="#30303c" />
      <path d="M373 510Q360 530 362 560Q400 632 557 632Q710 630 750 560Q752 530 742 500Z" fill="#303033" />
      <path d="M373 485V515Q400 580 557 580Q710 578 742 515V485Z" fill="#006f9b" />
      <ellipse cx="557" cy="487" rx="184" ry="73" fill="#0082b2" />
      <ellipse cx="557" cy="473" rx="113" ry="43" fill="url(#bore)" />
      {/* side port */}
      <path d="M215 900Q220 820 340 795L400 900Q390 960 330 985Q230 990 215 900Z" fill="#29292b" />
      <ellipse cx="287" cy="908" rx="34" ry="42" transform="rotate(-25 287 908)" fill="#19191b" />
      <Edge d={el(245, 412, 180, 73) + el(245, 392, 109, 42) + el(557, 487, 184, 73) + el(557, 473, 113, 43)} c="#3b4a52" />
      <Edge d="M66 440Q100 480 245 480T425 440M373 515Q410 560 557 560T742 515" c="#3b4a52" />
      <Edge d="M54 480Q90 530 245 530T362 505M54 495Q90 545 245 545T360 520M52 540Q90 600 245 600Q320 598 358 580M360 560Q400 610 557 610T750 560M358 585Q400 630 557 630T750 590M358 620Q400 688 557 688T748 630M88 812Q140 850 250 860M92 905Q140 955 240 950M400 905Q460 950 560 950T742 858M396 1000Q450 1050 560 1048T690 1010M662 920V1030M400 905V1030Q410 1080 470 1110" />
      <Edge d="M235 1030V1070Q245 1138 390 1138Q470 1138 520 1115M197 1090Q205 1190 370 1190T572 1130M200 1330Q240 1420 382 1425T565 1320M210 1360Q260 1440 382 1440T549 1380" c="#626266" />
      <Edge d={el(265, 890, 50, 75) + el(300, 895, 52, 85)} c="#555" />
      <Hid d="M142 460V830M345 470V850M357 560V830M434 520V760M446 540V880M658 545L648 910M52 740Q120 680 245 680Q330 680 400 720M88 790Q130 728 245 728T420 790M140 800Q170 773 245 773T340 800M88 812Q130 880 255 860" />
      <Hid d="M437 500V760M431 560V740" s="2 2" />
      <Hid d={el(478, 775, 80, 78) + el(490, 780, 36, 48)} s="8 4" />
      <Hid d="M240 860L440 745M315 940L530 815M530 760L740 850M560 760Q690 780 742 860M440 890Q480 860 560 862T700 900M530 815L535 1090M285 990V1420M487 1000L480 1400M75 720L110 860M120 700L140 850M385 780V900L440 880" s="8 4" />
      <Hid d="M245 860Q260 980 340 960M290 985Q380 930 480 990Q500 1040 400 1050Q330 1050 280 1010M240 1040Q300 985 400 1000Q520 1010 570 1080V1120L530 1155M170 1000L200 980L250 1030L170 1005M500 1110L600 1110L545 1140M400 1000V1030Q410 1080 490 1115M700 880L690 1000" s="8 4" />
      <Hid d={el(382, 1275, 185, 85)} s="10 6" />
      <Hid d={el(382, 1310, 175, 75) + el(382, 1300, 160, 60) + el(380, 1365, 120, 60) + el(380, 1390, 102, 45)} s="8 4" />
      <Hid d="M212 1260Q280 1236 382 1236T550 1264M210 1272Q280 1246 382 1246T552 1276M214 1284Q285 1258 382 1258T550 1288" s="9 5" />
      <Hid d="M210 1370Q260 1425 382 1430T545 1370" s="12 2" />
      <Hid d={el(245, 420, 168, 62) + el(557, 497, 170, 62)} s="8 5" c="#cfdfe6" />
      <Hid d="M152 402Q190 380 245 380T338 402M158 410Q195 388 245 388T332 410M165 417Q200 397 245 397T325 417M462 484Q500 462 557 462T652 484M470 492Q505 471 557 471T645 492M480 498Q510 480 557 480T636 498" s="7 5" c="#b9c7ce" />
      <path d="M348 440L425 470M380 490L430 480M350 420L380 440M660 500L690 520" stroke="#b9d4df" strokeWidth="3" strokeDasharray="2 2" {...ns} />
      <Hid d="M66 410V520M742 490V600M425 410V500" s="4 3" />
      <Yl d="M248 283L245 433M560 360L556 515" />
      <Pt x={246} y={374} />
      <Pt x={558} y={452} />
      <Pt x={241} y={814} c="#ffffa0" />
      <Pt x={544} y={904} c="#ffffa0" />
    </g>
  );
}

function ElbowRight() {
  return (
    <g transform="translate(1660 820) scale(.357143 .333333)">
      <path d="M248 32L193 438L60 602L116 172Z" fill="#c3c2da" stroke="#ffff1e" strokeWidth="1.300" {...ns} />
      <Yl d="M158 312L483 395M1421 635L1543 665" />
      <path d="M98 298L158 312" stroke="#b9a21c" strokeWidth="1.300" {...ns} />
      {/* release ring */}
      <path d="M568 190L610 198Q632 210 626 250Q590 500 540 610Q530 632 515 631L470 622Q447 600 462 500Q500 260 568 190Z" fill="url(#rimR)" />
      <path d="M610 198Q632 210 626 250Q590 500 540 610Q530 632 515 631Q495 610 510 530Q560 290 610 198Z" fill="#00496a" />
      <path d="M590 270Q620 250 600 330L555 560Q540 590 530 560Q540 400 590 270Z" fill="#0073a0" />
      {/* horizontal barrel */}
      <path d="M640 220Q660 208 690 212L1020 285L985 700L912 752L590 655Q540 640 545 600Q580 350 640 220Z" fill="url(#barrel)" />
      <path d="M1020 285L1060 370L985 700L905 752Q915 600 1005 315Z" fill="url(#cham)" />
      {/* elbow and vertical leg */}
      <path d="M1020 285L1215 335Q1340 360 1400 470Q1435 540 1428 620L1405 740L1375 840L1350 950L1374 1002L1350 1110L1265 1155L1225 1325Q1200 1358 1120 1360Q960 1345 917 1240L942 1080Q900 1020 893 975L912 872L947 850L972 750L985 690Q1020 480 1050 385Z" fill="url(#leg)" />
      <path d="M1050 385L1240 430Q1300 440 1350 500L1210 600L1185 655Q1120 680 1020 690L985 670Q1020 480 1050 385Z" fill="url(#barrel2)" />
      <path d="M1240 430Q1330 450 1390 560Q1402 610 1395 640Q1300 680 1185 655L1215 480Z" fill="url(#knee)" />
      <path d="M975 705Q970 740 1020 790Q1100 850 1230 868Q1340 865 1370 835L1360 815Q1320 845 1220 840Q1100 830 1020 760L990 710Z" fill="url(#ring3)" />
      <path d="M1374 1002L1223 1055L1200 1165L1265 1155L1350 1110Z" fill="#17171a" />
      <path d="M912 872L893 975L945 1080L972 1090L988 985Z" fill="#1a1a1d" />
      <path d="M945 870L988 985L1190 1020L1223 1055L1374 1002L1350 960Q1280 1030 1180 1015Q1000 975 945 870Z" fill="#333336" />
      <Edge d="M780 225Q690 400 665 685M1005 315Q920 500 908 750M1020 285L1055 385M1050 385L1240 430Q1330 450 1395 600M1020 285L1060 360L1260 405Q1390 440 1410 600M1215 335Q1390 380 1425 600M1240 430L1215 480L1185 655M1185 655Q1300 680 1395 640M985 670Q1000 720 1050 715Q1120 700 1185 655M988 985L970 1095M1223 1055L1200 1165M945 1080Q1060 1165 1200 1165T1350 1110M917 1240Q960 1345 1120 1358M640 220Q560 400 548 600M655 215Q580 400 560 630M510 530Q495 610 515 631M600 262Q530 400 525 560" />
      <Hid d="M640 285L690 315L1120 415V660L1060 650L590 560L540 545M1240 480L1110 450M1060 645L1190 670" s="5 4" />
      <Hid d="M1110 455L1250 490M1060 645L1130 662M1250 490Q1330 530 1318 600Q1300 670 1230 683" s="2 2" />
      <Hid d="M785 225Q800 400 740 560L680 690M1020 370L1015 470L915 750M1075 395L1060 450L1050 660M1110 420L1060 670M1255 400L1215 520L1190 680" s="9 7" />
      <Hid d="M1020 290L1070 365L1240 385Q1370 430 1405 560Q1400 700 1370 800" s="9 3" />
      <Hid d="M1260 405Q1380 450 1410 580V640L1380 800" s="3 2" />
      <Hid d="M1070 620L1210 530Q1330 510 1395 590V640M1130 650Q1200 600 1270 650L1265 710M985 700L1075 640M990 712Q1060 680 1130 675M985 705Q1020 680 1180 675M1215 685Q1330 700 1378 800M1260 710Q1330 740 1370 800" s="14 7" />
      <Hid d="M1120 680L1095 820L1070 960M1255 700L1225 860L1190 1020L1165 1150M1055 840L1040 930L990 975M1280 890L1265 990M945 850Q1000 815 1090 825Q1260 850 1350 950M1070 960L1050 1000L1035 1110" s="10 6" />
      <Hid d="M947 850Q1000 815 1090 825M1220 860Q1310 890 1350 960" s="20 2" />
      <Hid d="M893 975L990 975L1040 930L1200 985L1265 992L1350 1110M945 960Q1070 940 1200 985M1265 990L1300 1060L1290 1090" s="9 5" />
      <Hid d="M915 1010Q920 960 1020 962Q1180 975 1270 1030T1310 1110Q1310 1160 1230 1165Q1100 1165 960 1090Q920 1050 915 1010M950 1040Q950 970 1080 975Q1250 1000 1280 1090Q1270 1150 1180 1147Q1050 1140 980 1090Z" s="11 6" />
      <Hid d="M1020 1180V1220L1150 1230M1160 1170L1145 1270M930 1250Q940 1185 1020 1183Q1150 1190 1220 1270M970 1260Q970 1225 1040 1218Q1150 1225 1168 1300Q1160 1340 1090 1335Q990 1315 970 1260M1010 1240Q1030 1220 1090 1228Q1150 1250 1140 1280Q1120 1295 1080 1290Q1020 1270 1010 1240M932 1250Q960 1330 1060 1350M1100 1200Q1200 1230 1230 1290L1200 1340" s="12 6" />
      <Hid d="M675 215Q700 240 690 330Q660 560 600 645Q570 660 570 600Q600 350 675 215M690 215Q705 300 680 400T600 640M630 270Q560 400 560 600M575 200L545 420L470 620M545 275L480 525L500 530L545 285" s="7 4" c="#dadada" />
      <path d="M678 220L670 330L630 520L595 640M655 250L635 400L600 600" fill="none" stroke="#cfcfcf" strokeWidth="5" strokeDasharray="1.500 3 1.500 8" opacity=".8" {...ns} />
      <path d="M575 200L560 380L510 600M600 280L550 450" fill="none" stroke="#b8d6e2" strokeWidth="4" strokeDasharray="1.500 3 1.500 9" {...ns} />
      <Pt x={158} y={312} />
      <Pt x={483} y={395} c="#ffffa0" />
      <Pt x={1085} y={547} c="#ffffa0" />
    </g>
  );
}

function Defs() {
  const lg = (id: string, stops: [number, string][], a: number[] = [0, 0, 1, 0], user = false) => (
    <linearGradient id={id} x1={a[0]} y1={a[1]} x2={a[2]} y2={a[3]} gradientUnits={user ? "userSpaceOnUse" : "objectBoundingBox"}>
      {stops.map(([o, c]) => (
        <stop key={o} offset={o} stopColor={c} />
      ))}
    </linearGradient>
  );
  return (
    <defs>
      {lg("dk", [[0, "#303032"], [0.3, "#262627"], [0.6, "#1c1c1d"], [1, "#2a2a2b"]])}
      {lg("shine1", [[0, "#222"], [0.35, "#9c9c9c"], [0.7, "#222"]])}
      {lg("bl1", [[0, "#0090c4"], [1, "#004a68"]])}
      {lg("bl2", [[0, "#003f5a"], [0.5, "#00506f"], [1, "#075a7c"]])}
      {lg("hole1", [[0, "#062c40"], [0.35, "#00688f"], [0.8, "#0083b3"], [1, "#005a7c"]], [0.6, 0, 0.3, 1])}
      {lg("bore", [[0, "#26333a"], [0.5, "#003f58"], [1, "#0078a6"]])}
      {lg("cyl", [[0, "#2b2b2d"], [0.2, "#1e1e1f"], [0.6, "#202021"], [0.9, "#19191b"], [1, "#3a3a3f"]])}
      {lg("cone", [[0, "#3a3a3b"], [0.2, "#464647"], [0.38, "#a2a2a2"], [0.55, "#4c4c4d"], [1, "#222223"]])}
      {lg("rimR", [[0, "#0088ba"], [0.5, "#0079a6"], [1, "#00415c"]], [0, 0, 0, 1])}
      {lg("barrel", [[0, "#202021"], [0.2, "#2a2a2b"], [0.33, "#8e8e8e"], [0.42, "#6a6a6b"], [0.55, "#242425"], [0.85, "#151516"], [0.95, "#2c2c36"]], [830, 235, 740, 710], true)}
      {lg("barrel2", [[0, "#242425"], [0.2, "#3a3a3b"], [0.4, "#9a9a9a"], [0.6, "#3a3a3b"], [1, "#1b1b1c"]], [1140, 400, 1090, 670], true)}
      {lg("cham", [[0, "#1b1b1c"], [0.25, "#3a3a3b"], [0.6, "#1d1d1e"], [1, "#34343e"]], [0, 0, 0, 1])}
      {lg("leg", [[0, "#1a1a1c"], [0.3, "#262627"], [0.75, "#232324"], [1, "#161618"]])}
      {lg("ring3", [[0, "#222"], [0.25, "#39393a"], [0.45, "#b2b2b2"], [0.62, "#333334"], [1, "#222"]])}
      <radialGradient id="knee" cx=".2" cy=".3" r=".8">
        <stop offset="0" stopColor="#7d7d7d" />
        <stop offset=".4" stopColor="#39393a" />
        <stop offset="1" stopColor="#1e1e1f" />
      </radialGradient>
    </defs>
  );
}

function ViewCube() {
  return (
    <svg width="72" height="74" viewBox="0 0 72 74" role="img" aria-label="View cube" className="absolute top-[53px] right-[27px]">
      <path d="M1 12L30 1L70 9L68 55L45 72L4 60Z" fill="#e2e2e2" />
      <path d="M1 12L30 1L70 9L45 20Z" fill="#ececec" />
      <path d="M45 20L70 9L68 55L45 72Z" fill="#d6d6d6" />
      <path d="M1 12L30 1L70 9L45 20ZM45 20V72L4 60L1 12M70 9L68 55L45 72" fill="none" stroke="#8f8f8f" strokeDasharray="9 3" />
      <rect x="36" y="20" width="9" height="11" fill="#bcc6d0" opacity=".7" />
      <g fontFamily="Liberation Sans, sans-serif" fontWeight="bold" fill="#8d9297">
        <text fontSize="10" transform="translate(44 43) rotate(192)">BOTTOM</text>
        <text fontSize="9" transform="translate(54 24) rotate(86)">RIGHT</text>
        <text fontSize="8" transform="translate(51 9) rotate(188)">FRONT</text>
      </g>
    </svg>
  );
}

function Triad() {
  return (
    <svg width="52" height="64" viewBox="0 0 52 64" role="img" aria-label="Axis triad" className="absolute bottom-[20px] left-[45px]">
      <path d="M9 46V22" stroke="#101080" />
      <path d="M3 27L9 15L15 27Z" fill="#0a0a90" />
      <path d="M9 46L14 40" stroke="#0a0" />
      <path d="M9 46L24 52" stroke="#a01010" />
      <path d="M24 45L37 53L24 57Z" fill="#c01818" />
      <circle cx="18" cy="40" r="4.500" fill="#0a8f1a" />
      <g fontFamily="Liberation Sans, sans-serif" fontWeight="bold">
        <text x="5" y="11" fontSize="13" fill="#1010ff">Z</text>
        <text x="22" y="40" fontSize="10" fill="#10e010">Y</text>
        <text x="38" y="60" fontSize="14" fill="#ff1010">X</text>
      </g>
    </svg>
  );
}

/* ---------- dialog ---------- */

const GreyBtn = "rounded-[3px] border border-[#707070] bg-linear-to-b from-[#f4f4f4] via-[#e6e6e6] to-[#cfcfcf]";

function DlgSelect({ id, value, w, icon }: { id: string; value: string; w: string; icon?: React.ReactNode }) {
  return (
    <span className={`relative flex h-[22px] ${w} items-center ${GreyBtn}`}>
      {icon && <span className="pointer-events-none absolute left-[2px]">{icon}</span>}
      <select id={id} className={`h-full w-full appearance-none bg-transparent ${icon ? "pl-[21px]" : "pl-[3px]"}`}>
        <option>{value}</option>
      </select>
      <span className="pointer-events-none absolute right-1 flex">
        <Caret />
      </span>
    </span>
  );
}

function Help() {
  return (
    <svg width="15" height="16" viewBox="0 0 15 16" aria-hidden="true">
      <path d="M1 1H13V12H11V15L8 12H1Z" fill="#ffffb5" stroke="#111" />
      <text x="3.500" y="11" fontSize="11" fontWeight="bold" fontFamily="Liberation Sans, sans-serif" fill="#10107a">?</text>
    </svg>
  );
}

function Tick({ label, on }: { label: string; on?: boolean }) {
  return (
    <label className="flex items-center gap-[3px]">
      <span className="relative flex h-[13px] w-[13px]">
        <input type="checkbox" defaultChecked={on} className="h-[13px] w-[13px] appearance-none border border-[#8e8f8f] bg-linear-to-br from-[#cfd4da] to-white ring-1 ring-white ring-inset" />
        {on && (
          <svg width="13" height="13" viewBox="0 0 13 13" className="pointer-events-none absolute">
            <path d="M3 6L5.500 9.500L9.500 2.500" fill="none" stroke="#4a62a0" strokeWidth="2" />
          </svg>
        )}
      </span>
      {label}
    </label>
  );
}

function Dialog() {
  return (
    <div role="dialog" aria-label="Create In-Place Component" className="absolute top-[172px] left-[636px] w-[505px] rounded-[7px] border-2 border-[#5c5253] bg-linear-to-r from-[#e6d8d8] via-[#dfcccc] to-[#e4d6d6] px-[5px] pb-[5px] text-[11px] text-black shadow-[2px_3px_8px_rgba(0,0,0,0.55)]">
      <div className="flex h-[27px] items-start justify-between">
        <h2 className="pt-[4px] text-[12px] leading-[18px]">Create In-Place Component</h2>
        <button type="button" aria-label="Close dialog" className="flex h-[18px] w-[47px] items-center justify-center rounded-b border border-t-0 border-[#a08f90] bg-white/20">
          <svg width="12" height="10" viewBox="0 0 12 10">
            <path d="M2 1L10 9M10 1L2 9" stroke="#555" strokeWidth="4" />
            <path d="M2 1L10 9M10 1L2 9" stroke="#fff" strokeWidth="2" />
          </svg>
        </button>
      </div>
      <form className="border border-[#6d6566] bg-[#f0f0f0] pt-[11px] pr-[8px] pb-[9px] pl-[8px] leading-[14px]" onSubmit={(e) => e.preventDefault()}>
        <div className="flex items-start">
          <div className="flex w-[259px] flex-col gap-[6px]">
            <label htmlFor="cname">New Component Name</label>
            <input id="cname" defaultValue="hose" className="h-[20px] w-[252px] border border-[#e2e3ea] border-t-[#abadb3] bg-white pl-1" />
          </div>
          <div className="flex flex-1 flex-col gap-[6px]">
            <label htmlFor="tpl">Template</label>
            <DlgSelect id="tpl" value="Alkatrész_2011.ipt" w="w-[183px]" />
          </div>
          <button type="button" aria-label="Browse templates" className={`mt-[22px] flex h-[22px] w-[22px] items-center justify-center ${GreyBtn}`}>
            <svg width="13" height="16" viewBox="0 0 13 16"><path d="M1 1H9L12 4V15H1Z" fill="#f0f7fd" stroke="#111" /><path d="M9 1V4H12" fill="none" stroke="#111" /></svg>
          </button>
        </div>
        <div className="mt-[3px] flex items-end justify-between">
          <div className="flex flex-col gap-[6px]">
            <label htmlFor="loc">New File Location</label>
            <input id="loc" defaultValue="E:\grab\how" className="h-[20px] w-[443px] border border-[#e2e3ea] border-t-[#abadb3] bg-white pl-1" />
          </div>
          <button type="button" aria-label="Browse folders" className={`flex h-[22px] w-[22px] items-center justify-center ${GreyBtn}`}>
            <Icon>
              <path d="M1 13V3H6L7 5H14V13Z" fill="#f1d5a0" stroke="#9b7536" />
              <path d="M4 5Q5 10 10 10V8L15 11.500L10 15V13Q3 13 4 5Z" fill="#111" />
            </Icon>
          </button>
        </div>
        <div className="mt-[7px] flex flex-col gap-[6px]">
          <label htmlFor="bom">Default BOM Structure</label>
          <div className="flex items-center gap-[7px]">
            <DlgSelect
              id="bom"
              value="Normal"
              w="w-[194px]"
              icon={
                <Icon>
                  <path d="M1 1H4V4H1ZM4 4H7V7H4Z" fill="#8fb2e4" stroke="#222" strokeWidth=".8" />
                  <rect x=".5" y="4" width="3" height="3" fill="#ffc21c" stroke="#b6501a" strokeWidth=".8" />
                  <path d="M4 8V15M4 9H8M4 12H8M4 15H8M10 5H16M10 8H16M10 11H16M10 14H16" stroke="#111" strokeWidth="1.600" />
                </Icon>
              }
            />
            <Tick label="Virtual Component" />
          </div>
        </div>
        <div className="mt-[6px] flex">
          <Tick label="Constrain sketch plane to selected face or plane" on />
        </div>
        <div className="mt-[11px] flex items-center">
          <button type="button" aria-label="Help" className={`mr-auto flex h-[21px] w-[22px] items-center justify-center ${GreyBtn}`}>
            <Help />
          </button>
          <button type="submit" className={`mr-[10px] h-[21px] w-[73px] ${GreyBtn}`}>OK</button>
          <button type="button" className={`h-[21px] w-[73px] ${GreyBtn}`}>Cancel</button>
        </div>
      </form>
    </div>
  );
}

function Viewport() {
  return (
    <main className="relative min-w-0 flex-1 overflow-hidden border-l border-[#666] bg-white">
      <svg className="absolute top-0 -left-px h-full w-full overflow-visible" role="img" aria-label="Assembly model">
        <Defs />
        <g transform="translate(0 -138)">
          <ElbowLeft />
          <YFitting />
          <ElbowRight />
        </g>
      </svg>
      <div className="absolute top-[6px] right-[1px] flex items-center gap-[8px]">
        <button type="button" aria-label="Minimize document">
          <svg width="13" height="12" viewBox="0 0 13 12"><rect x=".5" y="6.500" width="12" height="3" fill="#fff" stroke="#555" /></svg>
        </button>
        <button type="button" aria-label="Restore document">
          <svg width="13" height="12" viewBox="0 0 13 12"><path d="M3.500 .5H11.500V8.500H8.500V11.500H.5V3.500H3.500Z" fill="#fff" stroke="#555" /><path d="M3.500 3.500H8.500V8.500M3.500 6H5.500V8.500H3.500Z" fill="none" stroke="#555" /></svg>
        </button>
        <button type="button" aria-label="Close document">
          <svg width="12" height="12" viewBox="0 0 12 12"><path d="M2 1L10 11M10 1L2 11" stroke="#555" strokeWidth="3.600" /><path d="M2 1L10 11M10 1L2 11" stroke="#fff" strokeWidth="1.600" /></svg>
        </button>
      </div>
      <ViewCube />
      <Triad />
      <Dialog />
    </main>
  );
}

/* ---------- model browser ---------- */

type Kind = "asm" | "rep" | "open" | "folder" | "plane" | "axis" | "center" | "pinpart" | "part" | "view" | "waxis" | "wplane" | "wpoint" | "pplane" | "paxis" | "pcenter" | "mate" | "angle";
type Node = { k: Kind; t: string; plus?: boolean; kids?: Node[] };

const Pin = () => <path d="M7 15L10 11L8 9L11 9L13 6L15.500 9L13 11V14L11 12Z" fill="#fff" stroke="#111" strokeWidth=".9" />;

function TreeIcon({ k }: { k: Kind }) {
  switch (k) {
    case "asm":
      return (
        <Icon>
          <Cube x={1} y={0.5} w={9} {...BLUE} k="#222" />
          <path d="M1 9H9L11 6H15.500V13L13.500 15.500H1Z" fill="#ffc52e" stroke="#8a4b00" />
          <path d="M7.500 9V15" stroke="#8a4b00" />
        </Icon>
      );
    case "rep":
      return (
        <Icon>
          <path d="M.5 15V2H6L7 4H15.500V15Z" fill="#f1d5a0" stroke="#9b7536" />
          <path d="M5 6V12H8M5 8.500H8" fill="none" stroke="#111" />
          <path d="M3 4H7V7H3ZM8 7H12V10H8ZM9 11H13V14H9Z" fill="#3d74b4" />
        </Icon>
      );
    case "open":
      return (
        <Icon>
          <path d="M.5 14V2.500H5L6 4H12V7" fill="#e8c887" stroke="#9b7536" />
          <path d="M.5 14L4 7H8L10 5H15.500L12 12Z" fill="#f1d5a0" stroke="#9b7536" />
        </Icon>
      );
    case "folder":
      return (
        <Icon>
          <path d="M.5 14.500V3H1.500L2.500 1.500H6L7 3H15.500V14.500Z" fill="#f3dcae" stroke="#8c6a36" />
        </Icon>
      );
    case "plane":
    case "pplane":
      return (
        <Icon>
          <rect x="4.500" y=".5" width="11" height="11" fill="#e6e6e6" stroke="#666" />
          <rect x=".5" y="3.500" width="11" height="11" fill="#c9c9c9" fillOpacity=".85" stroke="#666" />
          <path d="M4.500 3.500V11.500H11.500" fill="none" stroke="#888" />
          {k === "pplane" && <Pin />}
        </Icon>
      );
    case "axis":
    case "paxis":
      return (
        <Icon>
          <path d="M3 .5H15.500V12.500H3Z" fill="#f6f6f6" stroke="#444" />
          <path d="M0 15.500L10 5.500" stroke="#999" strokeWidth="1.500" />
          {k === "paxis" && <Pin />}
        </Icon>
      );
    case "center":
    case "pcenter":
      return (
        <Icon>
          <path d="M8 2.500L13 8L8 13.500L3 8Z" fill={k === "center" ? "#f2f2f2" : "#a8a8a8"} stroke="#a5a5a5" />
          <path d="M8 1V4M8 12V15M1 8H4M12 8H15" stroke="#a5a5a5" strokeWidth="1.500" />
          <circle cx="8" cy="8" r="1.800" fill="#ccc" stroke="#999" />
          {k === "pcenter" && <Pin />}
        </Icon>
      );
    case "part":
      return (
        <Icon>
          <path d="M.5 5L4 1H15.500V11L12 15H.5Z" fill="#f0b400" stroke="#8a4b00" />
          <path d="M.5 5L4 1H15.500L12 5Z" fill="#fff3a0" stroke="#8a4b00" />
          <rect x=".5" y="5" width="11.500" height="10" fill="#ffe54a" stroke="#8a4b00" />
        </Icon>
      );
    case "pinpart":
      return (
        <Icon>
          <path d="M.5 5L4 1H15.500V11L12 15H.5Z" fill="#ffd84a" stroke="#8a4b00" />
          <path d="M0 15.500L5 10.500" stroke="#111" strokeWidth="1.500" />
          <path d="M5 10.500L3.500 7.500L7 7L10 4.500L10.500 2L14 5.500L11.500 6.500L9 9.500L8.500 12.500Z" fill="#fff" stroke="#111" />
        </Icon>
      );
    case "view":
      return (
        <Icon>
          <path d="M2.500 3V13H5M6 6H9M7 6V12" fill="none" stroke="#111" strokeDasharray="3 1" />
          <path d="M0 0H5V3H0ZM6 4H11V7H6ZM11 8H16V11H11ZM5 12H10V15H5Z" fill="#3d74b4" />
          <path d="M0 2.500H4M6 6.500H10M11 10.500H16M5 14.500H9" stroke="#111" />
        </Icon>
      );
    case "waxis":
      return (
        <Icon>
          <rect x="3.500" y=".5" width="12" height="13" fill="#e4e9f0" stroke="#222" />
          <path d="M6 8L12 3M8 9L10 7" stroke="#d06a20" strokeWidth="1.500" />
          <rect x="0" y="8" width="5" height="5" fill="#1c5fa8" />
          <path d="M5 11Q9 7 15 9V14H5Z" fill="#8f9ac0" stroke="#223" strokeWidth=".7" />
        </Icon>
      );
    case "wplane":
      return (
        <Icon>
          <rect x="4.500" y=".5" width="11" height="12" fill="#d5dbe6" stroke="#222" />
          <rect x=".5" y="2.500" width="10" height="7" fill="#ffa552" stroke="#222" />
          <rect x="0" y="9" width="5" height="5" fill="#1c5fa8" />
          <path d="M5 11Q9 7 15 9V14H5Z" fill="#8f9ac0" stroke="#223" strokeWidth=".7" />
        </Icon>
      );
    case "wpoint":
      return (
        <Icon>
          <path d="M8 2.500L13.500 8L8 13.500L2.500 8Z" fill="#ffb877" stroke="#ef7c1c" />
          <path d="M8 0V4M0 8H4" stroke="#ef7c1c" strokeWidth="1.500" />
          <path d="M8 12V16M12 8H16" stroke="#222" strokeWidth="1.500" />
          <circle cx="8" cy="8" r="2" fill="#ffe0c4" stroke="#7a3a08" />
        </Icon>
      );
    case "mate":
      return (
        <Icon>
          <rect x=".5" y="8.500" width="7" height="6" fill="#fff" stroke="#111" />
          <rect x="9.500" y=".5" width="6" height="6" fill="#5c9ae0" stroke="#111" />
          <rect x="7" y=".5" width="3" height="14" fill="#d02222" stroke="#511" strokeWidth=".6" />
        </Icon>
      );
    case "angle":
      return (
        <Icon>
          <path d="M1 11L7 2" stroke="#111" />
          <path d="M7 2L15 9L13 12L5 5Z" fill="#5c9ae0" stroke="#111" />
          <path d="M1 11.500H12" stroke="#e01b1b" strokeWidth="1.500" />
          <rect x=".5" y="12.500" width="11" height="3" fill="#fff" stroke="#111" />
        </Icon>
      );
  }
}

const planes = (plus: boolean): Node[] => [
  { k: "plane", t: "YZ Plane" },
  { k: "plane", t: "XZ Plane", plus },
  { k: "plane", t: "XY Plane", plus },
  { k: "axis", t: "X Axis" },
  { k: "axis", t: "Y Axis" },
  { k: "axis", t: "Z Axis", plus },
  { k: "center", t: "Center Point" },
];
const qsl = (t: string, tail: Node[]): Node => ({
  k: "part",
  t,
  kids: [
    { k: "view", t: "View:" },
    { k: "open", t: "Origin", kids: planes(false) },
    ...["XY", "YZ", "ZX"].map((s): Node => ({ k: "pplane", t: `ANBAU_${s}` })),
    ...["X", "Y", "Z"].map((s): Node => ({ k: "paxis", t: `ANBAU_${s}` })),
    { k: "pcenter", t: "ANBAU_Center" },
    { k: "wplane", t: "Work Plane4" },
    { k: "waxis", t: "Work Axis5" },
    ...[4, 5, 6].map((n): Node => ({ k: "wpoint", t: `Work Point${n}`, plus: true })),
    ...tail,
  ],
});
const tree: Node[] = [
  { k: "rep", t: "Representations", plus: true },
  { k: "open", t: "Origin", kids: planes(true) },
  {
    k: "pinpart",
    t: "153150 QSY-8:1",
    kids: [
      { k: "view", t: "View:" },
      { k: "folder", t: "Origin", plus: true },
      { k: "waxis", t: "Work Axis4" },
      { k: "waxis", t: "Work Axis5" },
      { k: "wplane", t: "Work Plane1" },
      ...[7, 8, 9, 10, 11, 12].map((n): Node => ({ k: "wpoint", t: `Work Point${n}`, plus: true })),
    ],
  },
  qsl("130928 QSL-B-1/8-8-20:1", [
    { k: "mate", t: "Mate:1" },
    { k: "mate", t: "Mate:2" },
    { k: "mate", t: "Mate:3 (100,000 mm)" },
    { k: "angle", t: "Angle:1 (0,00 deg)" },
  ]),
  qsl("130928 QSL-B-1/8-8-20:2", [
    { k: "mate", t: "Mate:4" },
    { k: "mate", t: "Mate:5" },
    { k: "mate", t: "Mate:6 (150,000 mm)" },
    { k: "angle", t: "Angle:2 (180,00 deg)" },
  ]),
];

function Branch({ node, last }: { node: Node; last: boolean }) {
  const art = (
    <svg width="19" height="18" viewBox="0 0 19 18" className="shrink-0" aria-hidden="true">
      <path d={last ? "M4.500 0V9M4.500 8.500H16" : "M4.500 0V18M4.500 8.500H16"} stroke="#808080" fill="none" />
      {(node.plus || node.kids) && (
        <>
          <rect x=".5" y="4.500" width="8" height="8" fill="#fff" stroke="#808080" />
          <path d={node.plus ? "M2 8.500H7M4.500 6V11" : "M2 8.500H7"} stroke="#000" />
        </>
      )}
    </svg>
  );
  return node.plus || node.kids ? (
    <button type="button" aria-label={`${node.plus ? "Expand" : "Collapse"} ${node.t}`} className="flex shrink-0">
      {art}
    </button>
  ) : (
    art
  );
}

function Rows({ nodes, lines }: { nodes: Node[]; lines: boolean[] }) {
  return (
    <ul>
      {nodes.map((n, i) => {
        const last = i === nodes.length - 1;
        return (
          <li key={i}>
            <div className="flex h-[18px] items-center whitespace-nowrap">
              {lines.map((on, j) => (
                <svg key={j} width="19" height="18" className="shrink-0" aria-hidden="true">
                  {on && <path d="M4.500 0V18" stroke="#808080" />}
                </svg>
              ))}
              <Branch node={n} last={last} />
              <span className="mr-[2px] ml-px flex">
                <TreeIcon k={n.k} />
              </span>
              {n.t}
            </div>
            {n.kids && <Rows nodes={n.kids} lines={[...lines, !last]} />}
          </li>
        );
      })}
    </ul>
  );
}

function Browser() {
  return (
    <aside className="flex w-[349px] shrink-0 flex-col border-l-2 border-[#e2e2e2] bg-[#f0f0f0] pr-[3px] pl-[3px] text-[11px] text-black">
      <div className="flex h-[15px] items-center gap-[7px]">
        <span className="h-[5px] flex-1 border border-l-0 border-[#a0a0a0] bg-white" />
        <button type="button" aria-label="Close browser" className="flex pr-[3px]">
          <svg width="7" height="7" viewBox="0 0 7 7"><path d="M1 1L6 6M6 1L1 6" stroke="#000" strokeWidth="1.600" /></svg>
        </button>
      </div>
      <div className="flex h-[21px] items-center justify-between bg-[#ababab] pr-[3px] pl-2">
        <button type="button" className="flex items-center gap-1 font-['Open_Sans',sans-serif] text-[12px] font-bold text-white">
          Model <Caret dark={false} />
        </button>
        <button type="button" aria-label="Browser help"><Help /></button>
      </div>
      <div className="flex h-[27px] items-center pb-[2px]">
        <button type="button" aria-label="Filter" className="ml-1 flex">
          <Icon><path d="M.5 1.500H15.500V3.500L10 9V15L6 13V9L.5 3.500Z" fill="#aaa" stroke="#222" /><path d="M1 4H15" stroke="#222" /></Icon>
        </button>
        <span className="ml-[6px] h-[18px] w-px bg-[#888]" />
        <button type="button" className="ml-[13px] flex items-center gap-[3px] font-['Open_Sans',sans-serif] text-[12px] text-[#222]">
          <Icon>
            <path d="M0 4L6 1V7Z" fill="#777" stroke="#111" />
            <rect x="8" y="11" width="4" height="4" fill="#fff" stroke="#111" />
            <rect x="12" y="6" width="3.500" height="3.500" fill="#777" stroke="#111" />
            <rect x="10.500" y="6" width="2" height="8" fill="#d02222" />
          </Icon>
          Assembly View
          <span className="ml-[7px] flex"><Caret /></span>
        </button>
        <button type="button" aria-label="Find" className="ml-2 flex">
          <Icon><path d="M3 1H6V5H10V1H13L16 10V14H10V9H6V14H0V10Z" fill="#111" /><path d="M3 7L2 11M13 7L14 11" stroke="#fff" /></Icon>
        </button>
      </div>
      <div className="mb-[14px] flex-1 border border-[#646464] bg-white pl-1">
        <div className="flex h-[18px] items-center gap-1 text-[12px] font-bold">
          <TreeIcon k="asm" />
          how.iam
        </div>
        <Rows nodes={tree} lines={[]} />
      </div>
    </aside>
  );
}

/* ---------- taskbar ---------- */

const tasks = [
  {
    t: "GrabCAD - Googl...",
    i: (
      <>
        <circle cx="16" cy="16" r="14" fill="#e33b2e" />
        <path d="M3 10A14 14 0 0 0 14 30L20 20L10 18Z" fill="#35a852" />
        <path d="M16 10H29A14 14 0 0 1 14 30L21 18Z" fill="#fcd116" />
        <circle cx="16" cy="16" r="6.500" fill="#fff" />
        <circle cx="16" cy="16" r="5" fill="#3d7fe0" />
      </>
    ),
  },
  {
    t: "Skype™ - eznema...",
    i: (
      <>
        <path d="M9 1Q15 2 18 3Q29 6 28 18Q32 28 23 30Q18 29 15 28Q3 26 4 14Q0 4 9 1Z" fill="#12a5e8" />
        <path d="M21 11Q17 8 13 10T14 15T20 19T16 23T10 20" fill="none" stroke="#fff" strokeWidth="3" />
        <path d="M21 20Q27 17 28 21Q32 26 29 30Q24 31 22 28Q20 25 21 20Z" fill="#f2f8e6" stroke="#6db33f" />
      </>
    ),
  },
  {
    t: "McAfee Security S...",
    i: (
      <>
        <path d="M2 2Q16 -1 30 2V16Q28 26 16 31Q4 26 2 16Z" fill="#c9c9c9" stroke="#555" />
        <path d="M6 5Q16 3 26 5V16Q24 23 16 27Q8 23 6 16Z" fill="#a31226" />
        <path d="M10 18V9L16 15L22 9V18" fill="none" stroke="#fff" strokeWidth="3" />
      </>
    ),
  },
];
const Inv = () => (
  <>
    <rect x="3" y="1" width="27" height="30" fill="#1c1a18" />
    <path d="M1 2L12 0V4L9 5L10 20H14V23H3V20H5L4 6L1 6Z" fill="#f3f3f3" />
    <path d="M16 4Q28 6 28 18M18 10L27 14M20 3L24 18" stroke="#8d8d8d" fill="none" strokeWidth="1.500" />
    <rect x="1" y="23" width="30" height="8" fill="#f0930c" />
    <text x="16" y="30" fontSize="8" fontWeight="bold" fontFamily="Liberation Sans, sans-serif" textAnchor="start" fill="#fff" x-height="5">
      PR
    </text>
  </>
);

function Task({ label, children, cls = "rounded-[3px] border border-[#2e2222]" }: P & { label: string; cls?: string }) {
  return (
    <button type="button" className={`flex h-[39px] w-[160px] items-center gap-1 overflow-hidden bg-linear-to-br from-[#a39595] via-[#7d6b6b] to-[#6f5c5c] pl-[11px] whitespace-nowrap text-white ring-1 ring-white/30 ring-inset ${cls}`}>
      <Icon s={32} vb={32}>{children}</Icon>
      {label}
    </button>
  );
}

function Taskbar() {
  return (
    <footer className="flex h-10 items-center border-t border-[#2f2323] bg-linear-to-b from-[#7e6b6b] to-[#5f4b4b] font-['Open_Sans',sans-serif] text-[11px] text-white">
      <button type="button" aria-label="Start" className="ml-2 flex">
        <Icon s={38} vb={38}>
          <circle cx="19" cy="19" r="18" fill="#173f66" stroke="#a9c9dd" />
          <circle cx="19" cy="22" r="14" fill="#2c8fc4" />
          <ellipse cx="19" cy="10" rx="13" ry="8" fill="#9cc4dd" opacity=".6" />
          <path d="M10 13Q14 10 18 12L17 18Q13 16 9 19Z" fill="#f0602c" />
          <path d="M20 12Q24 15 29 12L28 18Q23 21 19 18Z" fill="#8cc63f" />
          <path d="M9 21Q13 18 17 20L16 27Q12 24 8 27Z" fill="#3fa9f5" />
          <path d="M19 20Q23 23 27 20L26 27Q21 30 18 27Z" fill="#ffd23c" />
        </Icon>
      </button>
      <button type="button" aria-label="Firefox" className="ml-[27px] flex">
        <Icon s={32} vb={32}>
          <circle cx="17" cy="14" r="12" fill="#2a6cb8" />
          <circle cx="18" cy="10" r="6" fill="#7db8ea" opacity=".8" />
          <path d="M5 5L8 9Q12 8 14 11L11 14Q12 18 17 18Q20 18 21 17Q20 23 14 22Q22 27 26 19Q29 13 26 5Q35 14 29 24Q24 31 15 31Q3 29 2 18Q2 9 5 5Z" fill="#ee7a1c" />
          <path d="M4 16Q6 26 16 28Q26 28 29 18Q29 30 16 31Q4 30 4 16Z" fill="#d9481a" />
        </Icon>
      </button>
      <div className="ml-[16px] flex gap-[2px]">
        {tasks.map((x) => (
          <Task key={x.t} label={x.t}>{x.i}</Task>
        ))}
        <span className="flex overflow-hidden rounded-[3px] border border-[#2e2222]">
          <Task label="Autodesk Invento..." cls=""><Inv /></Task>
          <Task label="Autodesk Invento..." cls=""><Inv /></Task>
        </span>
        <Task label="Total Commande...">
          <path d="M1 1H29L31 3V31H1Z" fill="#1c3fc8" stroke="#0c1c66" />
          <rect x="10" y="1" width="13" height="11" fill="#dfe4ee" />
          <rect x="12" y="3" width="4" height="7" fill="#1c3fc8" />
          <rect x="5" y="15" width="22" height="16" fill="#fff" />
          <path d="M7 19H25M7 23H25M7 27H25" stroke="#d02222" strokeWidth="1.500" />
        </Task>
      </div>
      <div className="ml-auto flex h-full items-center">
        <span>Asztal</span>
        <span className="mb-5 ml-2 text-[14px] leading-none font-bold">»</span>
        <span className="mr-[16px] ml-[11px] pb-1 text-[12px] text-[#e5dada]">HU</span>
        <svg width="8" height="5" viewBox="0 0 8 5"><path d="M0 5H8L4 0Z" fill="#fff" /></svg>
        <span className="ml-[13px] flex items-center gap-2">
          <Icon>
            <path d="M3 0H8V5H9V10H7V15H3V10H2V5H3Z" fill="#b9bfc6" stroke="#666" />
            <circle cx="11" cy="11" r="4.500" fill="#1f9a1f" stroke="#0c5c0c" />
            <path d="M9 11L10.500 13L13.500 9" fill="none" stroke="#fff" strokeWidth="1.500" />
          </Icon>
          <Icon>
            <circle cx="8" cy="8" r="7.500" fill="#2a6fd0" stroke="#dfe9f5" />
            <path d="M10 2L4 9H8L6 14L12 7H8.500Z" fill="#fff" />
          </Icon>
          <Icon>
            <circle cx="8" cy="8" r="7.500" fill="#f0521c" />
            <path d="M8 3V9.500M8 11V13" stroke="#fff" strokeWidth="2.200" />
          </Icon>
          <Icon>
            <rect x="5" y="4" width="10" height="8" fill="#5a4848" stroke="#fff" strokeWidth="1.500" />
            <path d="M6 14.500H14M1 2V6H4V2M2.500 6V13H5" fill="none" stroke="#fff" strokeWidth="1.400" />
          </Icon>
          <Icon>
            <path d="M2 5H5L9 1V15L5 11H2Z" fill="#fff" stroke="#555" strokeWidth=".6" />
            <path d="M11 5Q13 8 11 11" fill="none" stroke="#fff" strokeWidth="1.400" />
          </Icon>
        </span>
        <span className="mr-3 ml-[16px] flex w-[60px] flex-col items-center leading-[17px]">
          <time>10:29</time>
          <time>2013.05.06.</time>
        </span>
        <button type="button" aria-label="Show desktop" className="h-full w-[14px] border border-[#b9a9a9] bg-linear-to-br from-[#9a8a8a] to-[#5c4848]" />
      </div>
    </footer>
  );
}

export default function App() {
  return (
    <div className="flex min-h-screen flex-col bg-[#f0f0f0] font-['Open_Sans','Noto_Sans',sans-serif] text-[11px] leading-[15px]">
      <TitleBar />
      <Ribbon />
      <div className="flex flex-1 font-['Liberation_Sans',Arial,sans-serif]">
        <Viewport />
        <Browser />
      </div>
      <Taskbar />
    </div>
  );
}
